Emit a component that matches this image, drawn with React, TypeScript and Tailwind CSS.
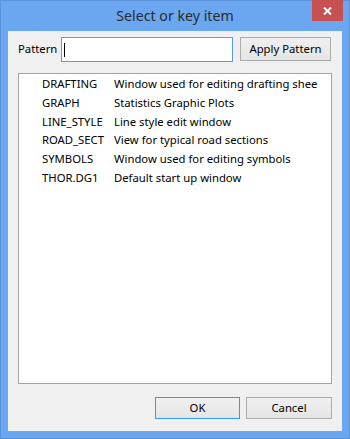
import React from "react";

const rows: [string, string][] = [
  ["DRAFTING", "Window used for editing drafting shee"],
  ["GRAPH", "Statistics Graphic Plots"],
  ["LINE_STYLE", "Line style edit window"],
  ["ROAD_SECT", "View for typical road sections"],
  ["SYMBOLS", "Window used for editing symbols"],
  ["THOR.DG1", "Default start up window"],
];

export default function App() {
  return (
    <div
      className="w-[350px] h-[439px] bg-[#6aa7f0] border border-[#5b93da] flex flex-col relative text-[11.3px] text-black"
      style={{ fontFamily: '"Noto Sans", "Open Sans", sans-serif' }}
    >
      <div className="h-[30px] flex items-center justify-center text-[14.2px] text-[#2b2b2b] pb-[1px]">
        Select or key item
      </div>
      <div className="absolute right-[6px] top-[-1px] w-[31px] h-[21px] bg-[#c75050] flex items-center justify-center">
        <svg width="9" height="8" viewBox="0 0 9 8">
          <path d="M1 0.5 L8 7.5 M8 0.5 L1 7.5" stroke="white" strokeWidth="2" />
        </svg>
      </div>
      <div className="mx-[7px] mb-[7px] flex-1 bg-[#f0f0f0] flex flex-col px-[10px] pt-[6px] pb-[12px]">
        <div className="flex items-start">
          <div className="w-[43px] h-[25px] flex items-center">Pattern</div>
          <div className="w-[172px] h-[25px] bg-white border border-[#569de5] flex items-center pl-[2px]">
            <div className="w-[1px] h-[14px] bg-black" />
          </div>
          <div className="ml-[7px] w-[91px] h-[24px] border border-[#acacac] bg-gradient-to-b from-[#f0f0f0] to-[#e5e5e5] flex items-center justify-center">
            Apply Pattern
          </div>
        </div>
        <div className="mt-[11px] h-[311px] bg-white border border-[#a5a5a5] pt-[1px] pl-[23px]">
          {rows.map(([a, b]) => (
            <div key={a} className="flex items-center h-[18.8px] whitespace-nowrap">
              <div className="w-[72px]">{a}</div>
              <div>{b}</div>
            </div>
          ))}
        </div>
        <div className="mt-[13px] flex justify-end">
          <div className="w-[85px] h-[22px] border border-[#3399ff] bg-gradient-to-b from-[#f0f0f0] to-[#e5e5e5] flex items-center justify-center">
            OK
          </div>
          <div className="ml-[6px] w-[86px] h-[22px] border border-[#acacac] bg-gradient-to-b from-[#f0f0f0] to-[#e5e5e5] flex items-center justify-center">
            Cancel
          </div>
        </div>
      </div>
    </div>
  );
}
